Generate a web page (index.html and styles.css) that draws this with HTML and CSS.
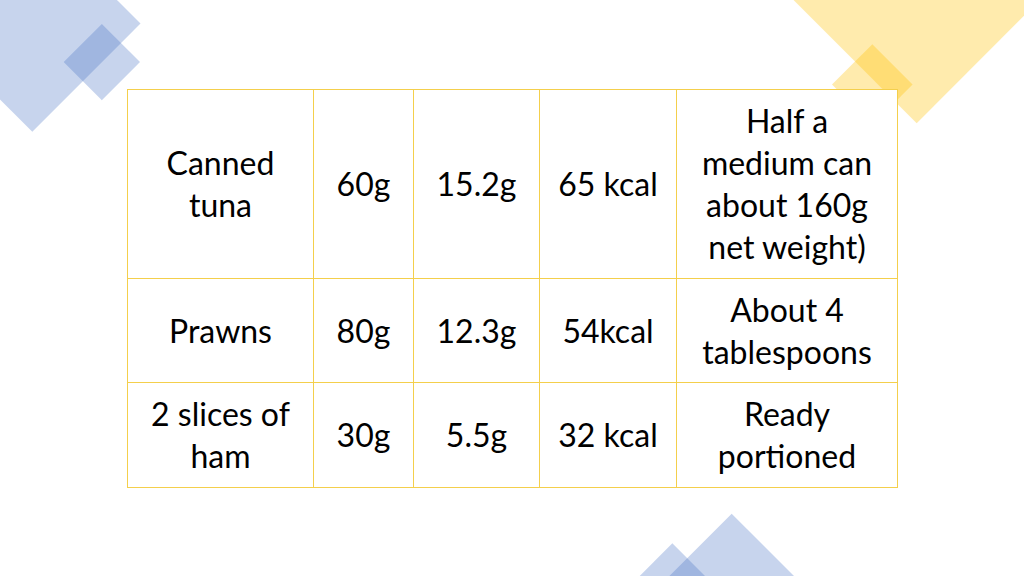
FILE: index.html
```html
<!DOCTYPE html>
<html lang="en">
<head>
<meta charset="utf-8">
<title>Protein portions</title>
<link rel="stylesheet" href="styles.css">
</head>
<body>
<div class="slide">
  <div class="shape blue tl-big"></div>
  <div class="shape blue tl-small"></div>
  <div class="shape yellow tr-big"></div>
  <div class="shape yellow tr-small"></div>
  <div class="shape blue bt-big"></div>
  <div class="shape blue bt-small"></div>

  <table class="food-table">
    <colgroup>
      <col class="c1"><col class="c2"><col class="c3"><col class="c4"><col class="c5">
    </colgroup>
    <tr class="r1">
      <td>Canned<br>tuna</td>
      <td>60g</td>
      <td>15.2g</td>
      <td>65 kcal</td>
      <td>Half a<br>medium can<br>about 160g<br>net weight)</td>
    </tr>
    <tr class="r2">
      <td>Prawns</td>
      <td>80g</td>
      <td>12.3g</td>
      <td>54kcal</td>
      <td>About 4<br>tablespoons</td>
    </tr>
    <tr class="r3">
      <td>2 slices of<br>ham</td>
      <td>30g</td>
      <td>5.5g</td>
      <td>32 kcal</td>
      <td>Ready<br>portioned</td>
    </tr>
  </table>
</div>
</body>
</html>
```

FILE: styles.css
```css
html, body {
  margin: 0;
  padding: 0;
  background: #ffffff;
}

.slide {
  position: relative;
  width: 1024px;
  height: 576px;
  overflow: hidden;
  background: #ffffff;
  padding-top: 89px;
  padding-left: 127px;
  box-sizing: border-box;
}

.shape {
  position: absolute;
  transform: rotate(45deg);
}

.blue { background: rgba(68, 114, 196, 0.3); }
.yellow { background: rgba(255, 192, 0, 0.32); }

.tl-big { left: -44.4px; top: -53.4px; width: 152.7px; height: 152.7px; }
.tl-small { left: 75.1px; top: 35.1px; width: 53.7px; height: 53.7px; }
.tr-big { left: 829.3px; top: -87.7px; width: 175.4px; height: 175.4px; }
.tr-small { left: 843.7px; top: 55.7px; width: 56.6px; height: 56.6px; }
.bt-big { left: 661.3px; top: 543.3px; width: 141.4px; height: 141.4px; }
.bt-small { left: 636.6px; top: 557.6px; width: 70.7px; height: 70.7px; }

.food-table {
  position: relative;
  z-index: 1;
  border-collapse: separate;
  border-spacing: 0;
  table-layout: fixed;
  width: 771px;
  border-left: 1px solid #f4cf4c;
  border-top: 1px solid #f4cf4c;
  background: #ffffff;
  font-family: Lato, "Open Sans", "Liberation Sans", sans-serif;
  font-size: 32px;
  line-height: 42px;
  color: #000000;
}

.c1 { width: 186px; }
.c2 { width: 100px; }
.c3 { width: 126px; }
.c4 { width: 137px; }
.c5 { width: 221px; }

.food-table td {
  box-sizing: border-box;
  border-right: 1px solid #f4cf4c;
  border-bottom: 1px solid #f4cf4c;
  text-align: center;
  vertical-align: middle;
  padding: 0 4px;
}

.r1 td { height: 189px; }
.r2 td { height: 104px; }
.r3 td { height: 105px; }
```
